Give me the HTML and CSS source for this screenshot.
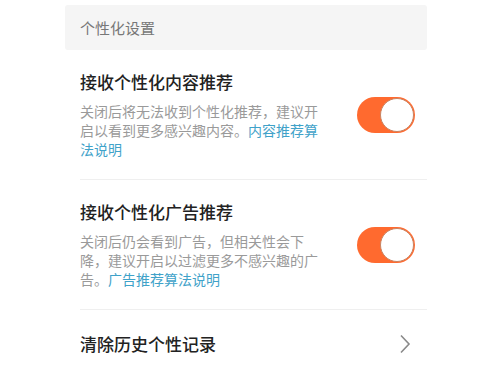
FILE: index.html
```html
<!DOCTYPE html>
<html lang="zh-CN">
<head>
    <meta charset="UTF-8">
    <meta name="viewport" content="width=device-width, initial-scale=1.0">
    <title>个性化设置</title>
    <link rel="stylesheet" href="styles.css">
</head>
<body>
    <div class="settings">
        <div class="group-title">个性化设置</div>

        <div class="row">
            <div class="row-text">
                <h3>接收个性化内容推荐</h3>
                <p>关闭后将无法收到个性化推荐，建议开启以看到更多感兴趣内容。<a href="#">内容推荐算法说明</a></p>
            </div>
            <span class="switch on"><span class="knob"></span></span>
        </div>

        <div class="row">
            <div class="row-text">
                <h3>接收个性化广告推荐</h3>
                <p>关闭后仍会看到广告，但相关性会下降，建议开启以过滤更多不感兴趣的广告。<a href="#">广告推荐算法说明</a></p>
            </div>
            <span class="switch on"><span class="knob"></span></span>
        </div>

        <div class="row row-link">
            <h3>清除历史个性记录</h3>
            <svg class="chevron" width="12" height="20" viewBox="0 0 12 20">
                <path d="M2 1.5 L10 10 L2 18.5" fill="none" stroke="#8a8a8a" stroke-width="1.6"/>
            </svg>
        </div>
    </div>
</body>
</html>
```

FILE: styles.css
```css
* {
    margin: 0;
    padding: 0;
    box-sizing: border-box;
}

body {
    font-family: "Noto Sans CJK SC", "Noto Sans", sans-serif;
    background: #ffffff;
    color: #222222;
}

.settings {
    width: 362px;
    margin: 5px 0 0 65px;
}

.group-title {
    height: 45px;
    padding-left: 15px;
    display: flex;
    align-items: center;
    background: #f5f5f5;
    border-radius: 3px;
    font-size: 15px;
    color: #777777;
}

.row {
    margin-left: 15px;
    padding: 20px 12px 20px 0;
    display: flex;
    align-items: center;
    justify-content: space-between;
    border-bottom: 1px solid #efefef;
}

.row h3 {
    font-size: 17px;
    font-weight: 500;
    line-height: 24px;
    color: #222222;
}

.row-text p {
    width: 242px;
    margin-top: 8px;
    font-size: 14px;
    line-height: 19px;
    color: #9a9a9a;
}

.row-text a {
    color: #3fa2c9;
    text-decoration: none;
}

.switch {
    width: 58px;
    height: 36px;
    border-radius: 18px;
    background: #ff6a2f;
    display: flex;
    align-items: center;
    justify-content: flex-end;
    padding-right: 1px;
}

.knob {
    width: 34px;
    height: 34px;
    border-radius: 50%;
    background: #ffffff;
    border: 1.5px solid #c98462;
}

.row-link {
    padding: 22px 16px 22px 0;
    border-bottom: none;
}
```
